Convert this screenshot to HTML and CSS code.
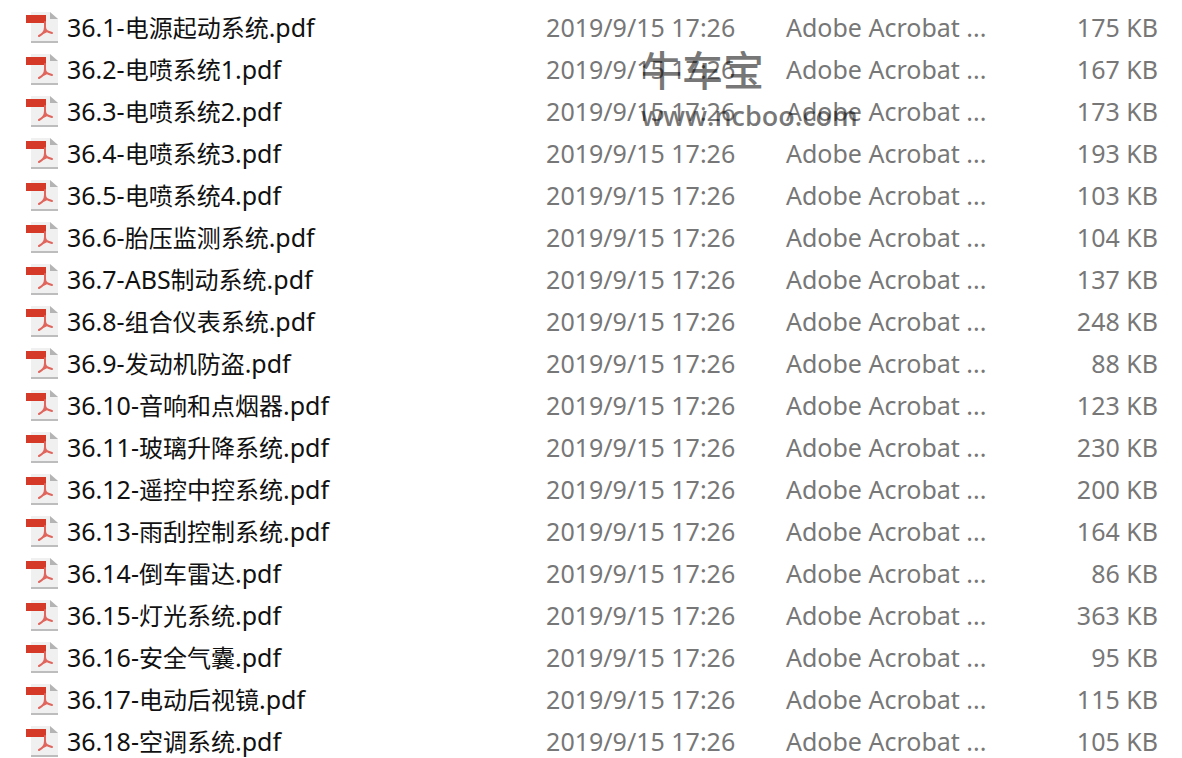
FILE: index.html
```
<!DOCTYPE html>
<html lang="zh-CN">
<head>
    <meta charset="UTF-8">
    <meta name="viewport" content="width=device-width, initial-scale=1.0">
    <title>PDF</title>
    <link rel="stylesheet" href="styles.css">
</head>
<body>

    <svg class="sprite" aria-hidden="true">
        <symbol id="pdf" viewBox="0 0 32 32">
            <path d="M5 1H24L32 8V31H5Z" fill="#f0f0f0"/>
            <path d="M5 30H32V32H5Z" fill="#bdbdbd"/>
            <path d="M24 1L32 8H24Z" fill="#b4b4b4"/>
            <path d="M0 4H20V12H0Z" fill="#d53a28"/>
            <path d="M19 11V16C19 20 17 23 13 25M19 16C19 20 22 21 26 22M17 22L21 20" fill="none" stroke="#e0655c" stroke-width="2" stroke-linecap="round"/>
        </symbol>
    </svg>

    <table class="files">
        <colgroup>
            <col class="col-name">
            <col class="col-date">
            <col class="col-type">
            <col class="col-size">
        </colgroup>
        <tbody id="fileRows"></tbody>
    </table>

    <div class="watermark">
        <div class="watermark-name">牛车宝</div>
        <div class="watermark-url">www.ncboo.com</div>
    </div>

    <script src="files.js"></script>
</body>
</html>
```
FILE: files.js
```
const files = [
    ['36.1-电源起动系统.pdf', 175],
    ['36.2-电喷系统1.pdf', 167],
    ['36.3-电喷系统2.pdf', 173],
    ['36.4-电喷系统3.pdf', 193],
    ['36.5-电喷系统4.pdf', 103],
    ['36.6-胎压监测系统.pdf', 104],
    ['36.7-ABS制动系统.pdf', 137],
    ['36.8-组合仪表系统.pdf', 248],
    ['36.9-发动机防盗.pdf', 88],
    ['36.10-音响和点烟器.pdf', 123],
    ['36.11-玻璃升降系统.pdf', 230],
    ['36.12-遥控中控系统.pdf', 200],
    ['36.13-雨刮控制系统.pdf', 164],
    ['36.14-倒车雷达.pdf', 86],
    ['36.15-灯光系统.pdf', 363],
    ['36.16-安全气囊.pdf', 95],
    ['36.17-电动后视镜.pdf', 115],
    ['36.18-空调系统.pdf', 105]
];

// Chinese runs are set slightly smaller than the Latin text
function formatName(name) {
    return name.replace(/[\u4e00-\u9fff]+/g, '<span class="zh">$&</span>');
}

document.getElementById('fileRows').innerHTML = files.map(([name, size]) => `
    <tr>
        <td><div class="file"><svg class="file-icon"><use href="#pdf"/></svg><span>${formatName(name)}</span></div></td>
        <td class="meta">2019/9/15 17:26</td>
        <td class="meta">Adobe Acrobat ...</td>
        <td class="meta size">${size} KB</td>
    </tr>`).join('');
```
FILE: styles.css
```
body {
    margin: 0;
    padding-top: 6px;
    background: #fff;
    font-family: "Noto Sans", "Noto Sans CJK SC", sans-serif;
    overflow-x: hidden;
}

.sprite {
    position: absolute;
    width: 0;
    height: 0;
}

.files {
    width: 100%;
    table-layout: fixed;
    border-collapse: collapse;
}

.col-name { width: 46.2%; }
.col-date { width: 20.3%; }
.col-type { width: 20%; }

.files td {
    height: 42px;
    padding: 0;
    font-size: 25px;
    line-height: 42px;
    white-space: nowrap;
}

.file {
    display: flex;
    align-items: center;
    gap: 9px;
    height: 42px;
    padding-left: 26px;
    color: #111;
}

.zh {
    font-size: 24px;
    line-height: 1;
}

.file-icon {
    width: 32px;
    height: 32px;
}

.files .meta {
    color: #777;
}

.files .size {
    padding-right: 24px;
    text-align: right;
}

/* Site mark laid over the list */
.watermark {
    position: absolute;
    top: 45px;
    left: 641px;
    color: rgba(0, 0, 0, 0.54);
    pointer-events: none;
}

.watermark-name {
    font-family: "Noto Sans CJK SC", sans-serif;
    font-size: 41px;
    font-weight: 500;
    line-height: 46px;
}

.watermark-url {
    font-family: "Open Sans", sans-serif;
    font-size: 27px;
    font-weight: 600;
    line-height: 50px;
}
```
